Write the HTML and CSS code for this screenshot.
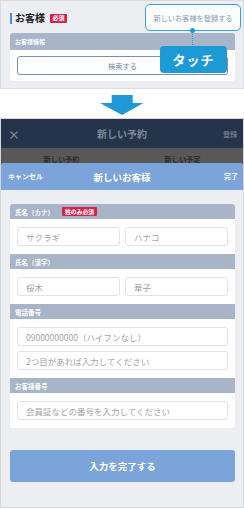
FILE: index.html
```html
<!DOCTYPE html>
<html lang="ja">
<head>
<meta charset="utf-8">
<link rel="stylesheet" href="styles.css">
</head>
<body>
<div class="top">
  <div class="top-head">
    <div class="title"><span class="bar"></span><span class="title-text">お客様</span><span class="badge">必須</span></div>
    <div class="reg-btn">新しいお客様を登録する</div>
  </div>
  <div class="top-card">
    <div class="sec-head">お客様情報</div>
    <div class="top-card-body"><div class="search-btn">検索する</div></div>
  </div>
  <span class="callout-dot"></span>
  <span class="callout-line"></span>
  <div class="callout">タッチ</div>
</div>
<div class="arrow">
  <svg width="44" height="20" viewBox="0 0 44 20"><polygon points="11.7,0 32.7,0 32.7,8 43.4,8 22,20 0,8 11.7,8" fill="#1e98d6"/></svg>
</div>
<div class="phone">
  <div class="nav">
    <svg class="close" width="8" height="8" viewBox="0 0 8 8"><path d="M0.5 0.5 L7.5 7.5 M7.5 0.5 L0.5 7.5" stroke="#7f8a99" stroke-width="1.1" fill="none"/></svg>
    <span class="nav-title">新しい予約</span>
    <span class="nav-right">登録</span>
  </div>
  <div class="under">
    <div class="tabs"><span>新しい予約</span><span>新しい予定</span></div>
    <div class="modal">
      <div class="modal-head">
        <span class="mh-left">キャンセル</span>
        <span class="mh-title">新しいお客様</span>
        <span class="mh-right">完了</span>
      </div>
      <div class="modal-body">
        <div class="form-card">
          <div class="sec-head">氏名（カナ）<span class="badge badge-sm">姓のみ必須</span></div>
          <div class="sec-body">
            <div class="row">
              <div class="input">サクラギ</div>
              <div class="input">ハナコ</div>
            </div>
          </div>
          <div class="sec-head">氏名（漢字）</div>
          <div class="sec-body">
            <div class="row">
              <div class="input">桜木</div>
              <div class="input">華子</div>
            </div>
          </div>
          <div class="sec-head">電話番号</div>
          <div class="sec-body">
            <div class="input">09000000000（ハイフンなし）</div>
            <div class="input">2つ目があれば入力してください</div>
          </div>
          <div class="sec-head">お客様番号</div>
          <div class="sec-body">
            <div class="input">会員証などの番号を入力してください</div>
          </div>
        </div>
        <div class="submit">入力を完了する</div>
      </div>
    </div>
  </div>
</div>
</body>
</html>
```
FILE: styles.css
```css
* { box-sizing: border-box; }
html, body { margin: 0; padding: 0; background: #ffffff; }
body {
  width: 244px;
  font-family: "Noto Sans CJK JP", "Noto Sans", sans-serif;
  color: #222;
}

/* top panel */
.top {
  position: relative;
  height: 89px;
  background: #eceef1;
  border: 1px solid #d9dce0;
  padding: 3px 2px 0 9px;
}
.top-head {
  display: flex;
  justify-content: space-between;
  align-items: center;
  height: 27px;
}
.title { display: flex; align-items: center; padding-top: 1px; }
.bar { width: 2px; height: 11px; background: #4a8ed6; margin-right: 3px; }
.title-text { font-size: 10px; font-weight: 700; line-height: 12px; color: #222; }
.badge {
  display: inline-flex;
  align-items: center;
  justify-content: center;
  background: #d3234b;
  color: #fff;
  font-weight: 700;
  font-size: 6px;
  line-height: 6px;
  height: 9px;
  width: 17px;
  margin-left: 5px;
  border-radius: 1px;
}
.reg-btn {
  width: 96px;
  height: 27px;
  border: 1.5px solid #3a9fd9;
  border-radius: 5px;
  background: #fbfcfd;
  color: #8b9bb3;
  font-size: 7.2px;
  display: flex;
  align-items: center;
  justify-content: center;
}
.top-card {
  margin: 2px 6px 0 0;
  background: #fff;
  border-radius: 3px;
  overflow: hidden;
}
.top-card .sec-head { height: 17px; font-size: 6px; }
.top-card-body { padding: 6px 7px; }
.search-btn {
  height: 19px;
  border: 1px solid #7790b5;
  border-radius: 3px;
  color: #7488a6;
  font-size: 7.2px;
  display: flex;
  align-items: center;
  justify-content: center;
}
.callout {
  position: absolute;
  left: 159px;
  top: 45px;
  width: 67px;
  height: 27px;
  background: #1c9ad6;
  border-radius: 4px;
  color: #fff;
  font-weight: 700;
  font-size: 13px;
  letter-spacing: 1px;
  display: flex;
  align-items: center;
  justify-content: center;
}
.callout-line {
  position: absolute;
  left: 191px;
  top: 30px;
  height: 16px;
  border-left: 1.5px dotted #1c9ad6;
}
.callout-dot {
  position: absolute;
  left: 188.8px;
  top: 26.5px;
  width: 5px;
  height: 5px;
  border-radius: 50%;
  background: #1c9ad6;
}

/* arrow */
.arrow { height: 20px; margin-top: 6px; padding-left: 100px; }
.arrow svg { display: block; }

/* phone */
.phone {
  margin-top: 3px;
  border: 1px solid #d3d6da;
  background: #eceef1;
}
.nav {
  position: relative;
  height: 29px;
  background: #25344a;
  display: flex;
  align-items: center;
  justify-content: center;
}
.close { position: absolute; left: 9px; top: 12px; }
.nav-title { font-size: 10px; font-weight: 700; color: #7d8898; }
.nav-right { position: absolute; right: 6px; top: 10px; font-size: 7px; font-weight: 700; color: #6e7a8a; }
.under { background: #585858; }
.tabs {
  height: 15px;
  overflow: hidden;
  display: flex;
}
.tabs span {
  flex: 1;
  text-align: center;
  font-size: 7.2px;
  line-height: 8px;
  padding-top: 7px;
  font-weight: 700;
  color: #2b2b2b;
}
.modal { background: #eceef1; border-radius: 4px 4px 0 0; overflow: hidden; }
.modal-head {
  position: relative;
  height: 27px;
  background: #7ba4da;
  display: flex;
  align-items: center;
  justify-content: center;
  color: #fff;
  font-weight: 700;
}
.mh-left { position: absolute; left: 7px; top: 9px; font-size: 7px; line-height: 9px; }
.mh-right { position: absolute; right: 5px; top: 9px; font-size: 7px; line-height: 9px; }
.mh-title { font-size: 9.5px; }
.modal-body { padding: 14px 8px 25px 9px; }
.form-card { background: #fff; border-radius: 3px; overflow: hidden; }
.sec-head {
  height: 15px;
  background: #a8b4c8;
  color: #fff;
  font-weight: 700;
  font-size: 6.5px;
  padding-left: 5px;
  display: flex;
  align-items: center;
}
.badge-sm { width: 35px; margin-left: 8px; font-size: 5.8px; }
.sec-body {
  padding: 8px 7px;
  display: flex;
  flex-direction: column;
  gap: 5px;
}
.row { display: flex; gap: 5px; }
.row .input { flex: 1; }
.input {
  height: 19px;
  border: 1px solid #e0e3e7;
  border-radius: 3px;
  background: #fff;
  color: #a0a4aa;
  font-size: 8.5px;
  padding-left: 8px;
  display: flex;
  align-items: center;
  white-space: nowrap;
}
.submit {
  margin-top: 22px;
  height: 32px;
  background: #7ba4da;
  border-radius: 3px;
  color: #fff;
  font-weight: 700;
  font-size: 9.5px;
  display: flex;
  align-items: center;
  justify-content: center;
}
```
